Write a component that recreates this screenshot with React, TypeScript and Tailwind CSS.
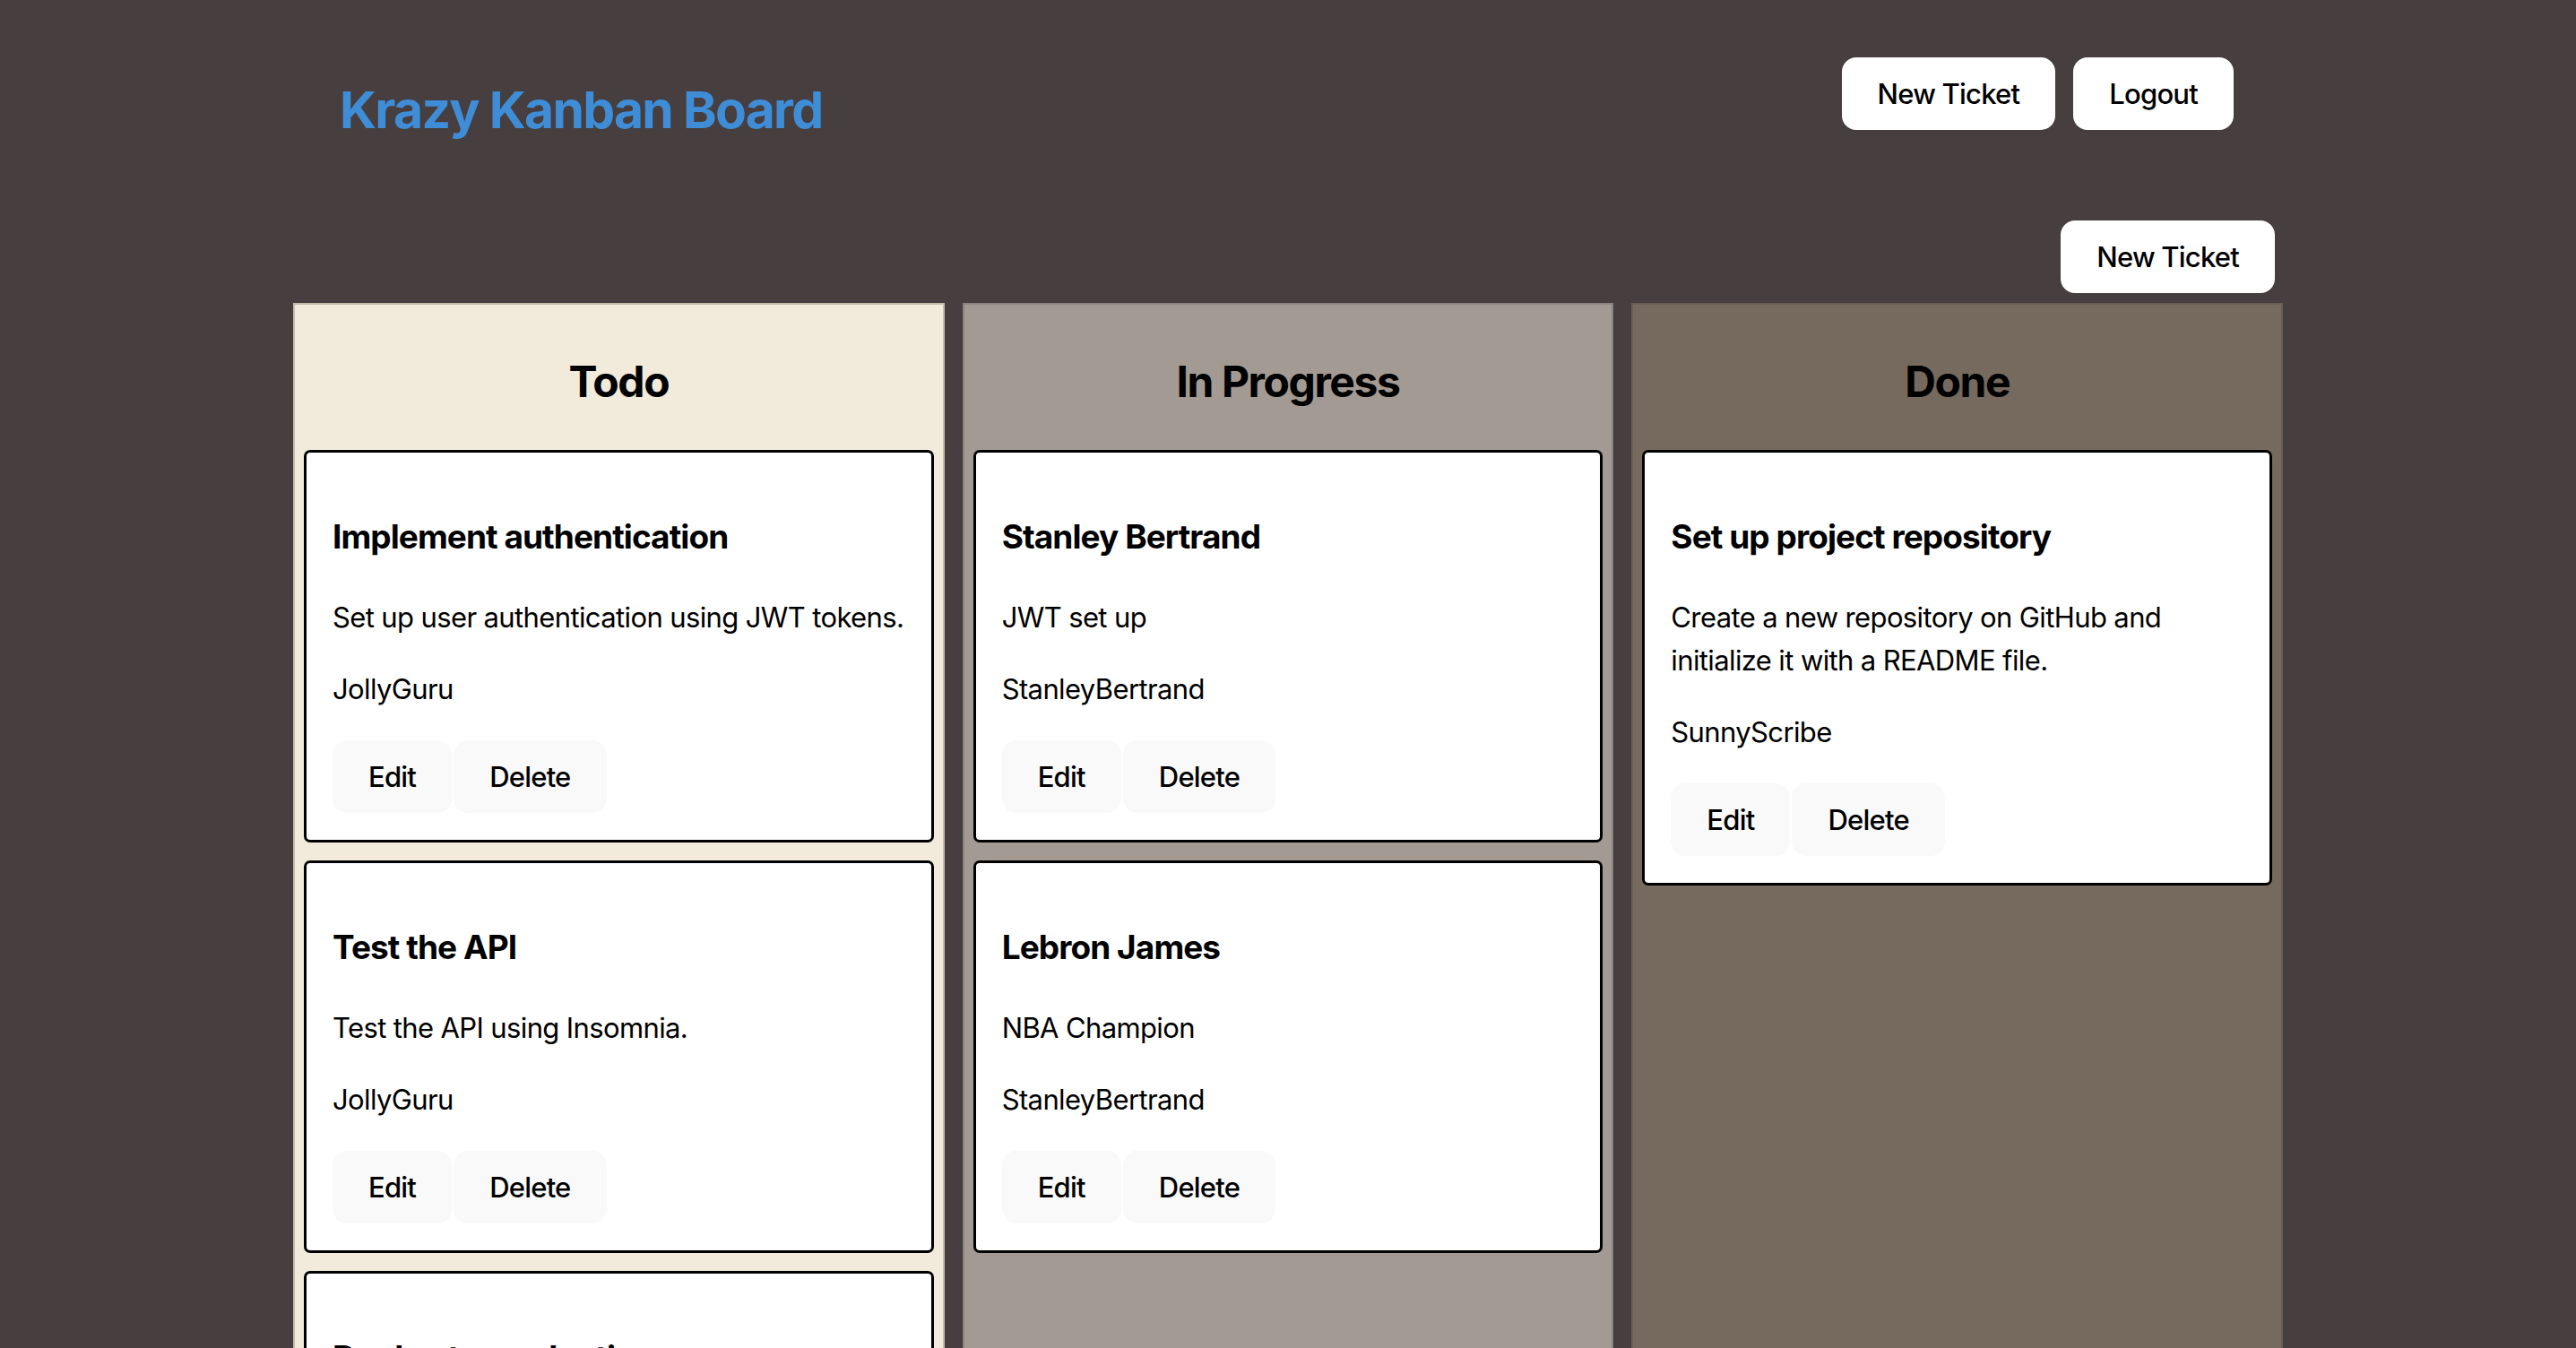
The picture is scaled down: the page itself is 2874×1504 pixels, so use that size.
import React from "react";

interface Ticket {
    name: string;
    description: string;
    assignee: string;
}

interface Column {
    title: string;
    bg: string;
    tickets: Ticket[];
}

const columns: Column[] = [
    {
        title: "Todo",
        bg: "bg-[#f2eadb] border-[#c5bcae]",
        tickets: [
            {
                name: "Implement authentication",
                description: "Set up user authentication using JWT tokens.",
                assignee: "JollyGuru",
            },
            {
                name: "Test the API",
                description: "Test the API using Insomnia.",
                assignee: "JollyGuru",
            },
            {
                name: "Deploy to production",
                description: "Deploy the application to Render.",
                assignee: "RadiantComet",
            },
        ],
    },
    {
        title: "In Progress",
        bg: "bg-[#a39a93] border-[#8a8480]",
        tickets: [
            {
                name: "Stanley Bertrand",
                description: "JWT set up",
                assignee: "StanleyBertrand",
            },
            {
                name: "Lebron James",
                description: "NBA Champion",
                assignee: "StanleyBertrand",
            },
        ],
    },
    {
        title: "Done",
        bg: "bg-[#76695d] border-[#6a5e54]",
        tickets: [
            {
                name: "Set up project repository",
                description:
                    "Create a new repository on GitHub and initialize it with a README file.",
                assignee: "SunnyScribe",
            },
        ],
    },
];

function TicketCard({ ticket }: { ticket: Ticket }) {
    return (
        <div className="bg-white border-[3px] border-black rounded-[7px] px-[29px] pt-[32px] pb-[30px]">
            <h3 className="mt-[34px] text-[37px] leading-[56px] font-bold tracking-[-0.025em] text-black">
                {ticket.name}
            </h3>
            <p className="mt-[38px] text-[31px] leading-[48px] tracking-[-0.02em] text-black">
                {ticket.description}
            </p>
            <p className="mt-[32px] text-[31px] leading-[48px] tracking-[-0.02em] text-black">
                {ticket.assignee}
            </p>
            <div className="mt-[33px] flex gap-[2px]">
                <button className="bg-[#f9f9f9] border-2 border-transparent rounded-[16px] px-[38px] py-[19px] text-[31px] leading-[39px] font-medium tracking-[-0.025em] text-black">
                    Edit
                </button>
                <button className="bg-[#f9f9f9] border-2 border-transparent rounded-[16px] px-[38px] py-[19px] text-[31px] leading-[39px] font-medium tracking-[-0.025em] text-black">
                    Delete
                </button>
            </div>
        </div>
    );
}

export default function App() {
    return (
        <div
            className="min-h-screen bg-[#463e3f] overflow-hidden"
            style={{ fontFamily: "Inter, 'Noto Sans', sans-serif" }}
        >
            <div className="w-[2220px] mx-auto">
                {/* Header */}
                <header className="flex justify-between items-start pl-[52px] pr-[55px]">
                    <h1 className="mt-[90px] text-[57px] leading-[66px] font-bold tracking-[-0.03em] text-[#3f8cd7]">
                        Krazy Kanban Board
                    </h1>
                    <div className="mt-[64px] flex gap-[20px]">
                        <button className="bg-white rounded-[16px] px-[38px] py-[19px] border-2 border-white text-[31px] leading-[39px] font-medium tracking-[-0.025em] text-black">
                            New Ticket
                        </button>
                        <button className="bg-white rounded-[16px] px-[38px] py-[19px] border-2 border-white text-[31px] leading-[39px] font-medium tracking-[-0.025em] text-black">
                            Logout
                        </button>
                    </div>
                </header>

                <div className="mt-[90px] flex justify-end pr-[9px]">
                    <button className="bg-white rounded-[16px] px-[38px] py-[19px] border-2 border-white text-[31px] leading-[39px] font-medium tracking-[-0.025em] text-black">
                        New Ticket
                    </button>
                </div>

                {/* Board */}
                <div className="mt-[11px] grid grid-cols-3 gap-[20px]">
                    {columns.map((col) => (
                        <div
                            key={col.title}
                            className={`${col.bg} border-2 min-h-[1300px] px-[10px]`}
                        >
                            <h2 className="pt-[50px] text-center text-[48px] leading-[72px] font-bold tracking-[-0.03em] text-black">
                                {col.title}
                            </h2>
                            <div className="mt-[40px] flex flex-col gap-[20px]">
                                {col.tickets.map((t) => (
                                    <TicketCard key={t.name} ticket={t} />
                                ))}
                            </div>
                        </div>
                    ))}
                </div>
            </div>
        </div>
    );
}
